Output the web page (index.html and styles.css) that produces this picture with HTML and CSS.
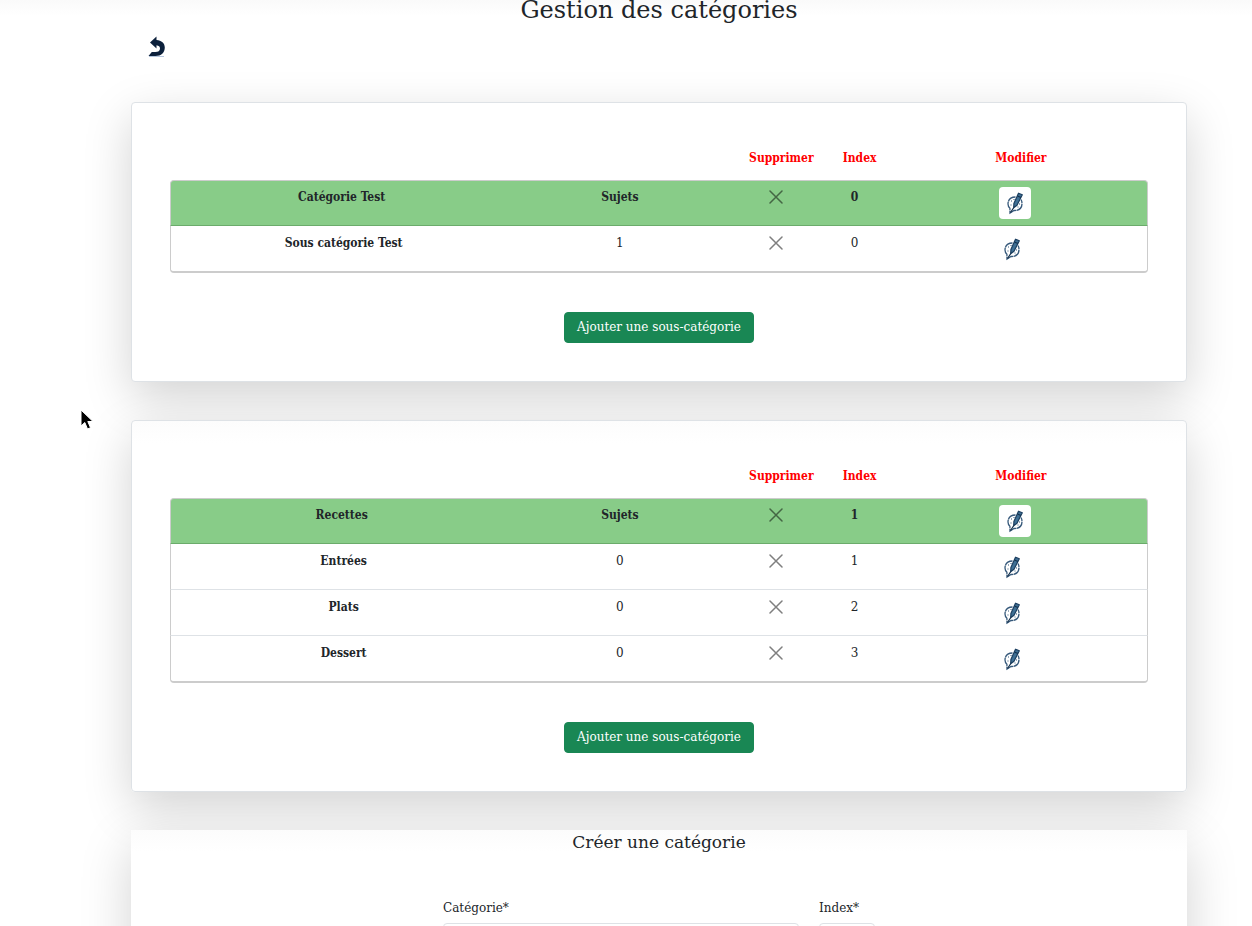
FILE: index.html
```html
<!DOCTYPE html>
<html lang="fr">
<head>
<meta charset="utf-8">
<title>Gestion des catégories</title>
<link rel="stylesheet" href="styles.css">
</head>
<body>
<svg class="defs" aria-hidden="true">
  <symbol id="cross" viewBox="0 0 14 14"><path d="M1 1l12 12M13 1L1 13" fill="none" stroke="currentColor" stroke-width="1.5" stroke-linecap="round"/></symbol>
  <symbol id="pen" viewBox="0 0 20 24">
    <path d="M10.500 6C5.500 6 3 9 3 13c0 1.800.8 3.200 1.900 4.200L5 22l4-2.500c5 .2 8-2.500 8-7 0-1.500-.3-3-1-4" fill="none" stroke="#35587a" stroke-width="1.300" stroke-dasharray="9 .5"/>
    <path d="M6 10h1M5.500 14h1M14 13h1M12.500 16h1M8.500 8.500h1" stroke="#35587a" stroke-width="1.200"/>
    <path d="M13.500 2.200l3.800 1.600-5.300 10.500-3.300 2.500.2-4.200z" fill="#3f7095" stroke="#1c3f60" stroke-width="1.200" stroke-linejoin="round"/>
    <path d="M12.500 5l3.400 1.500M8.800 16.500L5.500 21.500" fill="none" stroke="#14304b" stroke-width="1.200"/>
  </symbol>
</svg>
<main class="page">
  <h1 class="title">Gestion des catégories</h1>
  <a class="back" href="#" aria-label="Retour">
    <svg width="18" height="22" viewBox="0 0 18 22"><path d="M2 6.500L8.500.5v3.600c5 .4 8.300 3.200 8.300 7.400 0 5-3.600 8.500-9.300 8.500H.5l3.300-4h3.500c3 0 4.700-1.400 4.700-3.600 0-1.700-1.200-2.900-3.500-3.200v3.300z" fill="#0c203b"/><path d="M1 20.500h15" stroke="#b4c6de" stroke-width="1"/></svg>
  </a>

  <section class="card">
    <table class="list">
      <colgroup><col class="c-name"><col class="c-count"><col class="c-del"><col class="c-index"><col class="c-edit"></colgroup>
      <thead><tr><td></td><td></td><th scope="col">Supprimer</th><th scope="col">Index</th><th scope="col">Modifier</th></tr></thead>
      <tbody>
        <tr class="cat"><th scope="row">Catégorie Test</th><th>Sujets</th><td><button class="icon" aria-label="Supprimer"><svg class="cross"><use href="#cross"/></svg></button></td><th>0</th><td><button class="icon edit" aria-label="Modifier"><svg class="pen"><use href="#pen"/></svg></button></td></tr>
        <tr><th scope="row">Sous catégorie Test</th><td>1</td><td><button class="icon" aria-label="Supprimer"><svg class="cross"><use href="#cross"/></svg></button></td><td>0</td><td><button class="icon edit" aria-label="Modifier"><svg class="pen"><use href="#pen"/></svg></button></td></tr>
      </tbody>
    </table>
    <button class="add">Ajouter une sous-catégorie</button>
  </section>

  <section class="card">
    <table class="list">
      <colgroup><col class="c-name"><col class="c-count"><col class="c-del"><col class="c-index"><col class="c-edit"></colgroup>
      <thead><tr><td></td><td></td><th scope="col">Supprimer</th><th scope="col">Index</th><th scope="col">Modifier</th></tr></thead>
      <tbody>
        <tr class="cat"><th scope="row">Recettes</th><th>Sujets</th><td><button class="icon" aria-label="Supprimer"><svg class="cross"><use href="#cross"/></svg></button></td><th>1</th><td><button class="icon edit" aria-label="Modifier"><svg class="pen"><use href="#pen"/></svg></button></td></tr>
        <tr><th scope="row">Entrées</th><td>0</td><td><button class="icon" aria-label="Supprimer"><svg class="cross"><use href="#cross"/></svg></button></td><td>1</td><td><button class="icon edit" aria-label="Modifier"><svg class="pen"><use href="#pen"/></svg></button></td></tr>
        <tr><th scope="row">Plats</th><td>0</td><td><button class="icon" aria-label="Supprimer"><svg class="cross"><use href="#cross"/></svg></button></td><td>2</td><td><button class="icon edit" aria-label="Modifier"><svg class="pen"><use href="#pen"/></svg></button></td></tr>
        <tr><th scope="row">Dessert</th><td>0</td><td><button class="icon" aria-label="Supprimer"><svg class="cross"><use href="#cross"/></svg></button></td><td>3</td><td><button class="icon edit" aria-label="Modifier"><svg class="pen"><use href="#pen"/></svg></button></td></tr>
      </tbody>
    </table>
    <button class="add">Ajouter une sous-catégorie</button>
  </section>

  <form class="create">
    <h2 class="subtitle">Créer une catégorie</h2>
    <div class="fields">
      <div class="field field-name"><label for="name">Catégorie*</label><input id="name" type="text"></div>
      <div class="field field-index"><label for="index">Index*</label><input id="index" type="text"></div>
    </div>
  </form>
</main>
<svg class="pointer" width="14" height="22" viewBox="0 0 14 22" aria-hidden="true"><path d="M1 1v16l3.800-3.500L7.500 20l3-1.300L7.800 12.500H13z" fill="#000" stroke="#fff" stroke-width="1"/></svg>
</body>
</html>
```
FILE: styles.css
```css
* { box-sizing: border-box; }
html { overflow: hidden; }
body {
  margin: 0;
  height: 100vh;
  overflow: hidden;
  background: #fff;
  color: #212529;
  font: 12px/20px "DejaVu Serif", serif;
}
.defs { position: absolute; width: 0; height: 0; }
.page {
  padding: 0 65px 0 131px;
  background: linear-gradient(#fafafa, #fff 16px);
}
.title {
  margin: 0;
  height: 31px;
  font-size: 24px;
  line-height: 20px;
  font-weight: 400;
  text-align: center;
}
.back {
  display: flex;
  align-items: center;
  justify-content: center;
  width: 32px;
  height: 32px;
  margin: 0 0 39px 10px;
}
.card {
  display: flex;
  flex-direction: column;
  align-items: center;
  margin-bottom: 38px;
  padding: 38px;
  background: #fff;
  border: 1px solid #dee2e6;
  border-radius: 4px;
  box-shadow: 0 16px 48px rgba(0, 0, 0, .176);
}
.card + .card,
.create { background: linear-gradient(#fcfcfc, #fff 22px); }

.list {
  width: 100%;
  table-layout: fixed;
  border-collapse: separate;
  border-spacing: 0;
  text-align: center;
}
.c-name { width: 35%; }
.c-count { width: 22%; }
.c-del { width: 10%; }
.c-index { width: 6%; }
.list th, .list td { padding: 0; vertical-align: top; }
.list th {
  font-family: "DejaVu Serif Condensed", "DejaVu Serif", serif;
  font-weight: 700;
}
.list thead th, .list thead td { height: 39px; padding: 7px 0 0 10px; color: #f00; }
.list tbody th, .list tbody td {
  height: 46px;
  padding-top: 6px;
  border-bottom: 1px solid #dee2e6;
}
.list tbody tr:first-child > * { border-top: 1px solid #ccc; }
.list tbody tr:last-child > * { height: 47px; border-bottom: 2px solid #ccc; }
.list tbody tr > :first-child { border-left: 1px solid #ccc; }
.list tbody tr > :last-child { border-right: 1px solid #ccc; }
.list tbody tr:first-child > :first-child { border-top-left-radius: 4px; }
.list tbody tr:first-child > :last-child { border-top-right-radius: 4px; }
.list tbody tr:last-child > :first-child { border-bottom-left-radius: 4px; }
.list tbody tr:last-child > :last-child { border-bottom-right-radius: 4px; }
.list tbody .cat > * { background: #8c8; border-bottom-color: #6bab6b; }
.list tbody tr:not(.cat) > * { padding-top: 7px; }
.list tbody tr:not(.cat) > :first-child { padding-left: 4px; }
.list tbody tr:not(.cat) > :last-child { padding-right: 6px; }

.icon {
  display: inline-flex;
  align-items: center;
  justify-content: center;
  height: 20px;
  padding: 0;
  border: 0;
  border-radius: 4px;
  background: none;
  color: rgba(0, 0, 0, .5);
  vertical-align: top;
}
.icon.edit { width: 32px; height: 32px; background: #fff; }
.cross { width: 14px; height: 14px; }
.pen { width: 20px; height: 24px; }

.add {
  margin-top: 39px;
  padding: 4px 12px 5px;
  border: 1px solid #198754;
  border-radius: 4px;
  background: #198754;
  color: #fff;
  font: inherit;
}

.create {
  height: 300px;
  box-shadow: 0 16px 48px rgba(0, 0, 0, .176);
}
.subtitle {
  margin: 0 0 44px;
  font-size: 17px;
  line-height: 24px;
  font-weight: 400;
  text-align: center;
}
.fields { display: flex; justify-content: center; gap: 20px; }
.field { display: flex; flex-direction: column; gap: 5px; }
.field-name { width: 356px; }
.field-index { width: 56px; }
.field input {
  width: 100%;
  height: 32px;
  padding: 4px 8px;
  border: 1px solid #dee2e6;
  border-radius: 4px;
  background: #fff;
  font: inherit;
}
.pointer { position: absolute; left: 80px; top: 409px; }
```
